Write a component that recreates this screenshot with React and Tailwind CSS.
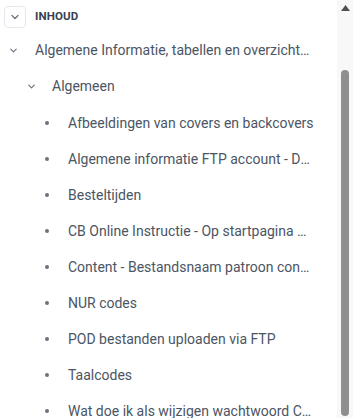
import { ChevronDown } from 'lucide-react';

const items = [
  { title: 'Afbeeldingen van covers en backcovers', wide: true },
  { title: 'Algemene informatie FTP account - Digitale bestanden' },
  { title: 'Besteltijden' },
  { title: 'CB Online Instructie - Op startpagina bekijken' },
  { title: 'Content - Bestandsnaam patroon controleren' },
  { title: 'NUR codes' },
  { title: 'POD bestanden uploaden via FTP' },
  { title: 'Taalcodes' },
  { title: 'Wat doe ik als wijzigen wachtwoord CB Online' },
];

export default function App() {
  return (
    <div className="flex h-[418px] w-[353px] overflow-hidden bg-white font-['Roboto',sans-serif] text-[14px] text-[#4b5563]">
      <div className="flex min-w-0 flex-1 flex-col">
        {/* kop */}
        <div className="flex h-[32px] shrink-0 items-center gap-[9px] pl-[4px] pt-[1px]">
          <button className="flex h-[22px] w-[22px] items-center justify-center rounded-[4px] border border-[#e5e7eb] text-[#6b7280]">
            <ChevronDown size={12} strokeWidth={2.5} />
          </button>
          <span className="text-[11.5px] font-bold tracking-[0.01em] text-[#374151]">INHOUD</span>
        </div>

        <div className="flex h-[36px] shrink-0 items-center pl-[8px]">
          <ChevronDown size={11} strokeWidth={2.5} className="shrink-0 text-[#6b7280]" />
          <span className="ml-[16px] truncate pr-[24px]">Algemene Informatie, tabellen en overzichten</span>
        </div>

        <div className="flex h-[37px] shrink-0 items-center pl-[26px]">
          <ChevronDown size={11} strokeWidth={2.5} className="shrink-0 text-[#6b7280]" />
          <span className="ml-[15px] truncate">Algemeen</span>
        </div>

        {items.map((item) => (
          <div key={item.title} className="flex h-[36px] shrink-0 items-center pl-[45px]">
            <span className="h-[4px] w-[4px] shrink-0 rounded-full bg-[#6b7280]"></span>
            <span className={item.wide ? 'ml-[19px] truncate pr-[16px]' : 'ml-[19px] truncate pr-[24px]'}>
              {item.title}
            </span>
          </div>
        ))}
      </div>

      {/* scrollbalk */}
      <div className="flex w-[16px] shrink-0 flex-col items-center bg-[#f8f8f8]">
        <svg width="9" height="6" viewBox="0 0 9 6" className="mt-[5px]">
          <path d="M4.5 0L9 6H0z" fill="#505050" />
        </svg>
        <div className="mt-[59px] h-[346px] w-[8px] rounded-[4px] bg-[#8f8f8f]"></div>
      </div>
    </div>
  );
}
